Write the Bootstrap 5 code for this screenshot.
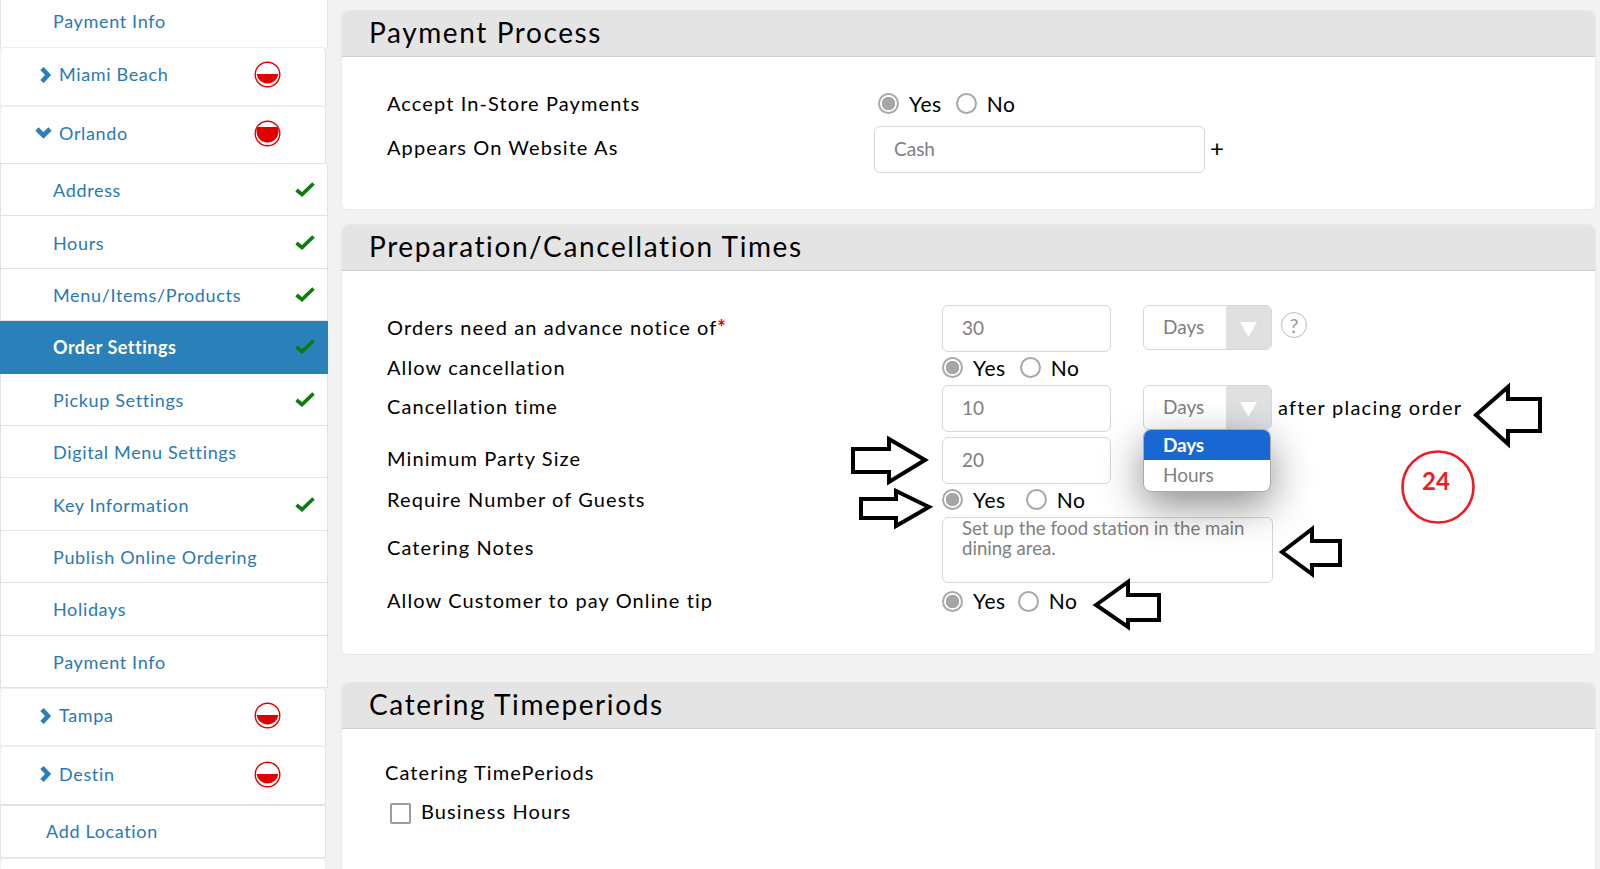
<!doctype html>
<html lang="en"><head><meta charset="utf-8"><title>Order Settings</title>
<link href="https://cdn.jsdelivr.net/npm/bootstrap@5.3.0/dist/css/bootstrap.min.css" rel="stylesheet">
<style>
html,body{height:869px;overflow:hidden}
body{background:#f2f2f2;font-family:"Lato","Liberation Sans",sans-serif;color:#000;position:relative}
.side{width:328px;flex:none;height:869px;background:#f2f2f2;overflow:hidden}
.srow{height:52.4px;background:#fff;border:1px solid #e2e2e2;border-width:0 1px 1px 1px;padding:2px 12px 0 52px;color:#2a78b8;font-size:18px;letter-spacing:.66px;text-decoration:none}
.srow.first{height:47px;border-bottom:0;padding-top:0;padding-bottom:5px}
.srow.on{background:#2a80b9;color:#fff;font-weight:700;letter-spacing:.5px;border-color:#2a80b9}
.srow.add{padding-left:45px;height:53px;margin-right:2px;border-top:1px solid #e2e2e2;padding-top:0}
.loc{height:58.5px;background:#fff;border:1px solid #eee;border-right-color:#e2e2e2;border-radius:5px 5px 0 0;margin-right:2px;color:#2a78b8;font-size:18px;letter-spacing:.66px;padding:0 0 3px 34px;text-decoration:none}
.loc.low{border-bottom-color:#e2e2e2}
.chev{width:24px;flex:none}
.gauge{margin-left:auto;margin-right:44px}
.tick{margin-left:auto;margin-top:-3px}
.tail{height:30px;background:#fff;border:1px solid #eee;border-radius:5px 5px 0 0;margin-right:2px}
.main{flex:1;padding:10px 4px 0 13px;min-width:0}
.pane{background:#fff;border:1px solid #e8e8e8;border-radius:6px;margin-bottom:14px}
.pane-head{height:46px;background:#e5e4e5;border-bottom:1px solid #cfcfcf;border-radius:6px 6px 0 0;padding-left:27px;font-size:28px;line-height:43px;letter-spacing:1.6px}
.one{height:200px}.two{height:431px;margin-bottom:27px}.three{height:187px;margin-bottom:0;border-bottom:0;border-radius:6px 6px 0 0}
.frow{padding-left:45px;display:flex;align-items:center}
.lab{width:555px;flex:none;font-size:20px;letter-spacing:1.1px;white-space:nowrap;margin-top:-4px}
.lab1{width:491px}
.lab-up{margin-top:-6px}
.req{color:#e00000;font-weight:700}
.fbox.form-control{border:1px solid #d6d6d6;border-radius:6px;color:#808080;font-size:19px;padding:0 19px 2px;box-shadow:none;height:47px;background:#fff}
.w-cash.form-control{width:331px;height:47px;margin-left:-4px}
.w-num.form-control{width:169px}
.note.form-control{width:331px;height:66px;padding:0 19px;line-height:20px;font-size:18.6px;resize:none;overflow:hidden}
.plus{font-size:24px;margin:-3px 0 0 5px;line-height:1}
.radios{font-size:21px;letter-spacing:.6px;display:flex;align-items:center;margin-top:-2px}
.radios .form-check-input{width:21px;height:21px;margin:0 10px 0 0;border:2px solid #a9a9a9;background:#fff;flex:none;box-shadow:none}
.radios .form-check-input:checked{background:radial-gradient(circle,#a6a6a6 0 6.5px,#fff 7px)}
.gap-a{margin-right:14px}.gap-b{margin-right:20px}.gap-c{margin-right:12px}
.sel{width:129px;height:45px;border:1px solid #d6d6d6;border-radius:6px;background:#fff;color:#808080;font-size:19px;margin:-2px 0 0 32px;padding-left:19px;position:relative;overflow:visible}
.caret{position:absolute;right:0;top:0;bottom:0;width:45px;background:#dfe0e2;border-radius:0 5px 5px 0;display:flex;align-items:center;justify-content:center;padding-top:4px}
.drop{position:absolute;left:-1px;top:43px;width:128px;height:63px;background:#fff;border-radius:8px;border:1px solid #aaa;box-shadow:0 14px 40px rgba(0,0,0,.45);z-index:3;overflow:hidden;font-size:19px}
.drop-a{background:#1967d2;color:#fff;height:30px;line-height:29px;padding-left:19px;font-weight:700;letter-spacing:-.2px}
.drop-b{height:30px;line-height:30px;padding-left:19px;color:#808080}
.helpc{width:26px;height:26px;border:1px solid #bbb;border-radius:50%;color:#9a9a9a;font-size:20px;line-height:24px;text-align:center;margin-left:9px;margin-top:-8px}
.after{font-size:20px;letter-spacing:1.25px;margin:-4px 0 0 6px}
.chk{width:21px;height:21px;border:2px solid #9c9c9c;border-radius:2px;margin:0 10px 0 5px;flex:none}
.marks{position:absolute;left:0;top:0;width:1600px;height:869px;pointer-events:none;z-index:5}
.count{font-family:"Lato",sans-serif;font-size:24px;font-weight:700;fill:#ed1c24}
</style></head>
<body>
<div class="d-flex">
<nav class="side">
 <a class="srow first d-flex align-items-center" href="#">Payment Info</a>
 <a class="loc d-flex align-items-center" href="#"><svg class="chev" width="24" height="16" viewBox="0 0 24 16"><path d="M6 1.5 L12 8 L6 14.5" transform="translate(1,0)" fill="none" stroke="#2a80b9" stroke-width="4.6"/></svg>Miami Beach<svg class="gauge" width="27" height="27" viewBox="0 0 27 27"><circle cx="13.5" cy="13.5" r="12.3" fill="#fff" stroke="#e00000" stroke-width="1.4"/><path d="M2.6 13 H24.4 A11 11 0 0 1 2.6 13Z" fill="#e00000"/></svg></a>
 <a class="loc low d-flex align-items-center" href="#"><svg class="chev" width="24" height="16" viewBox="0 0 24 16"><path d="M2 4 L8.5 10.5 L15 4" fill="none" stroke="#2a80b9" stroke-width="4.6"/></svg>Orlando<svg class="gauge" width="27" height="27" viewBox="0 0 27 27"><circle cx="13.5" cy="13.5" r="12.3" fill="#fff" stroke="#e00000" stroke-width="1.4"/><path d="M3.5 7 H23.5 A11 11 0 1 1 3.5 7Z" fill="#e00000"/></svg></a>
 <a class="srow d-flex align-items-center" href="#">Address<svg class="tick" width="20" height="16" viewBox="0 0 20 16"><path d="M1.5 9 L7 13.5 L18.5 2.5" fill="none" stroke="#0a7d0a" stroke-width="3.6"/></svg></a>
 <a class="srow d-flex align-items-center" href="#">Hours<svg class="tick" width="20" height="16" viewBox="0 0 20 16"><path d="M1.5 9 L7 13.5 L18.5 2.5" fill="none" stroke="#0a7d0a" stroke-width="3.6"/></svg></a>
 <a class="srow d-flex align-items-center" href="#">Menu/Items/Products<svg class="tick" width="20" height="16" viewBox="0 0 20 16"><path d="M1.5 9 L7 13.5 L18.5 2.5" fill="none" stroke="#0a7d0a" stroke-width="3.6"/></svg></a>
 <a class="srow on d-flex align-items-center" href="#">Order Settings<svg class="tick" width="20" height="16" viewBox="0 0 20 16"><path d="M1.5 9 L7 13.5 L18.5 2.5" fill="none" stroke="#0a7d0a" stroke-width="3.6"/></svg></a>
 <a class="srow d-flex align-items-center" href="#">Pickup Settings<svg class="tick" width="20" height="16" viewBox="0 0 20 16"><path d="M1.5 9 L7 13.5 L18.5 2.5" fill="none" stroke="#0a7d0a" stroke-width="3.6"/></svg></a>
 <a class="srow d-flex align-items-center" href="#">Digital Menu Settings</a>
 <a class="srow d-flex align-items-center" href="#">Key Information<svg class="tick" width="20" height="16" viewBox="0 0 20 16"><path d="M1.5 9 L7 13.5 L18.5 2.5" fill="none" stroke="#0a7d0a" stroke-width="3.6"/></svg></a>
 <a class="srow d-flex align-items-center" href="#">Publish Online Ordering</a>
 <a class="srow d-flex align-items-center" href="#">Holidays</a>
 <a class="srow d-flex align-items-center" href="#">Payment Info</a>
 <a class="loc d-flex align-items-center" href="#"><svg class="chev" width="24" height="16" viewBox="0 0 24 16"><path d="M6 1.5 L12 8 L6 14.5" transform="translate(1,0)" fill="none" stroke="#2a80b9" stroke-width="4.6"/></svg>Tampa<svg class="gauge" width="27" height="27" viewBox="0 0 27 27"><circle cx="13.5" cy="13.5" r="12.3" fill="#fff" stroke="#e00000" stroke-width="1.4"/><path d="M2.6 13 H24.4 A11 11 0 0 1 2.6 13Z" fill="#e00000"/></svg></a>
 <a class="loc low d-flex align-items-center" href="#"><svg class="chev" width="24" height="16" viewBox="0 0 24 16"><path d="M6 1.5 L12 8 L6 14.5" transform="translate(1,0)" fill="none" stroke="#2a80b9" stroke-width="4.6"/></svg>Destin<svg class="gauge" width="27" height="27" viewBox="0 0 27 27"><circle cx="13.5" cy="13.5" r="12.3" fill="#fff" stroke="#e00000" stroke-width="1.4"/><path d="M2.6 13 H24.4 A11 11 0 0 1 2.6 13Z" fill="#e00000"/></svg></a>
 <a class="srow add d-flex align-items-center" href="#">Add Location</a>
 <div class="tail"></div>
</nav>
<main class="main">
 <section class="pane one">
  <div class="pane-head">Payment Process</div>
  <div class="frow" style="padding-top:32px;height:61px"><div class="lab lab1" style="margin-top:-2px">Accept In-Store Payments</div>
   <div class="radios" style="margin-top:0"><input class="form-check-input" type="radio" name="a" checked><span class="gap-a">Yes</span><input class="form-check-input" type="radio" name="a"><span>No</span></div></div>
  <div class="frow" style="margin-top:8px"><div class="lab lab1 lab-up">Appears On Website As</div><input class="form-control fbox w-cash" value="Cash"><span class="plus">+</span></div>
 </section>
 <section class="pane two">
  <div class="pane-head">Preparation/Cancellation Times</div>
  <div class="frow" style="padding-top:34px"><div class="lab">Orders need an advance notice of<span class="req">*</span></div><input class="form-control fbox w-num" value="30"><div class="sel d-flex align-items-center">Days<span class="caret"><svg width="17" height="15" viewBox="0 0 17 15"><path d="M0 0H17L8.5 15Z" fill="#fff"/></svg></span></div><div class="helpc">?</div></div>
  <div class="frow" style="height:33px"><div class="lab">Allow cancellation</div><div class="radios"><input class="form-check-input" type="radio" name="b" checked><span class="gap-a">Yes</span><input class="form-check-input" type="radio" name="b"><span>No</span></div></div>
  <div class="frow"><div class="lab lab-up">Cancellation time</div><input class="form-control fbox w-num" value="10"><div class="sel d-flex align-items-center">Days<span class="caret"><svg width="17" height="15" viewBox="0 0 17 15"><path d="M0 0H17L8.5 15Z" fill="#fff"/></svg></span><div class="drop"><div class="drop-a">Days</div><div class="drop-b">Hours</div></div></div><span class="after">after placing order</span></div>
  <div class="frow" style="margin-top:5px"><div class="lab lab-up">Minimum Party Size</div><input class="form-control fbox w-num" value="20"></div>
  <div class="frow" style="height:33px"><div class="lab">Require Number of Guests</div><div class="radios"><input class="form-check-input" type="radio" name="c" checked><span class="gap-b">Yes</span><input class="form-check-input" type="radio" name="c"><span>No</span></div></div>
  <div class="frow"><div class="lab lab-up">Catering Notes</div><textarea class="form-control fbox note">Set up the food station in the main dining area.</textarea></div>
  <div class="frow" style="height:38px"><div class="lab">Allow Customer to pay Online tip</div><div class="radios"><input class="form-check-input" type="radio" name="d" checked><span class="gap-c">Yes</span><input class="form-check-input" type="radio" name="d"><span>No</span></div></div>
 </section>
 <section class="pane three">
  <div class="pane-head">Catering Timeperiods</div>
  <div class="frow" style="padding:31px 0 0 43px;height:58px"><div class="lab">Catering TimePeriods</div></div>
  <div class="frow" style="padding-left:43px;height:40px;margin-top:6px"><span class="chk"></span><span class="lab">Business Hours</span></div>
 </section>
</main>
</div>
<svg class="marks" viewBox="0 0 1600 869">
 <g fill="#fff" stroke="#000" stroke-width="4" stroke-linejoin="miter">
  <polygon points="925,460 889,439 889,449 853,449 853,472 889,472 889,482"/>
  <polygon points="929,507 896,491 896,499 861,499 861,518 896,518 896,526"/>
  <polygon points="1476,415 1508,387 1508,399 1540,399 1540,431 1508,431 1508,444"/>
  <polygon points="1282,552 1312,529 1312,541 1340,541 1340,565 1312,565 1312,574"/>
  <polygon points="1096,605 1128,582 1128,595 1159,595 1159,620 1128,620 1128,627"/>
 </g>
 <circle cx="1438" cy="487" r="35.5" fill="none" stroke="#ed1c24" stroke-width="2.6"/>
 <text class="count" x="1436" y="490" text-anchor="middle">24</text>
</svg>
</body></html>
